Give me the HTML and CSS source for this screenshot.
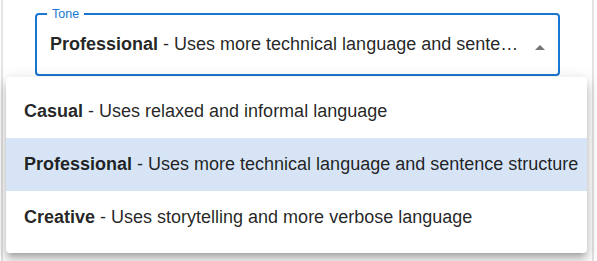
FILE: index.html
```html
<!DOCTYPE html>
<html lang="en">
<head>
  <meta charset="UTF-8">
  <meta name="viewport" content="width=device-width, initial-scale=1.0">
  <title>Tone</title>
  <link rel="stylesheet" href="styles.css">
</head>
<body>
  <div class="panel">
    <div class="form">
      <fieldset class="field field-focused">
        <legend class="field-label">Tone</legend>
        <div class="select-value">
          <span><b>Professional</b> - Uses more technical language and sentence structure</span>
        </div>
        <svg class="select-arrow" viewBox="0 0 24 24" width="24" height="24"><path d="M7 14l5-5 5 5z"/></svg>
      </fieldset>
      <div class="field field-next"></div>
    </div>

    <ul class="menu">
      <li class="menu-item"><b>Casual</b> - Uses relaxed and informal language</li>
      <li class="menu-item selected"><b>Professional</b> - Uses more technical language and sentence structure</li>
      <li class="menu-item"><b>Creative</b> - Uses storytelling and more verbose language</li>
    </ul>
  </div>
</body>
</html>
```

FILE: styles.css
```css
html,body{
  margin : 0;
  width : 100%;
  height : 100%;
  background : #fff;
  overflow : hidden;
}
body{
  font-family : "Liberation Sans", Arial, sans-serif;
  color : rgba(0,0,0,0.87);
}
.panel{
  position : relative;
  height : 100%;
  margin-left : 1px;
  margin-right : 3px;
  border-left : 2px solid #e3e3e3;
  border-right : 2px solid #e3e3e3;
}
.form{
  padding : 7px 0 0 32px;
  width : 525px;
}

/* outlined select */
.field{
  box-sizing : border-box;
  min-width : 0;
  width : 525px;
  margin : 0;
  padding : 0 38px 0 13px;
  border : 2px solid #1976d2;
  border-radius : 4px;
  height : 69px;
  position : relative;
  display : flex;
  align-items : center;
}
.field-label{
  font-size : 12.5px;
  color : #1976d2;
  padding : 0 5px;
  margin-left : -3px;
  line-height : 14px;
}
.select-value{
  flex : 1;
  min-width : 0;
  font-size : 18px;
  white-space : nowrap;
  overflow : hidden;
  text-overflow : ellipsis;
  margin-top : -7px;
}
.select-arrow{
  position : absolute;
  right : 6px;
  top : 15px;
  fill : #757575;
}
.field-next{
  border : 1px solid #c9c9c9;
  margin-top : 12px;
  height : 100px;
}

/* dropdown menu */
.menu{
  position : absolute;
  left : 3px;
  top : 77px;
  width : 581px;
  margin : 0;
  padding : 8px 0 9px;
  list-style : none;
  background : #fff;
  border-radius : 4px;
  box-shadow : 0 5px 5px -3px rgba(0,0,0,0.2),
               0 8px 10px 1px rgba(0,0,0,0.14),
               0 3px 14px 2px rgba(0,0,0,0.12);
}
.menu-item{
  height : 53px;
  line-height : 53px;
  padding-left : 18px;
  font-size : 18px;
  white-space : nowrap;
}
.menu-item.selected{
  background : #d7e4f5;
}
```
